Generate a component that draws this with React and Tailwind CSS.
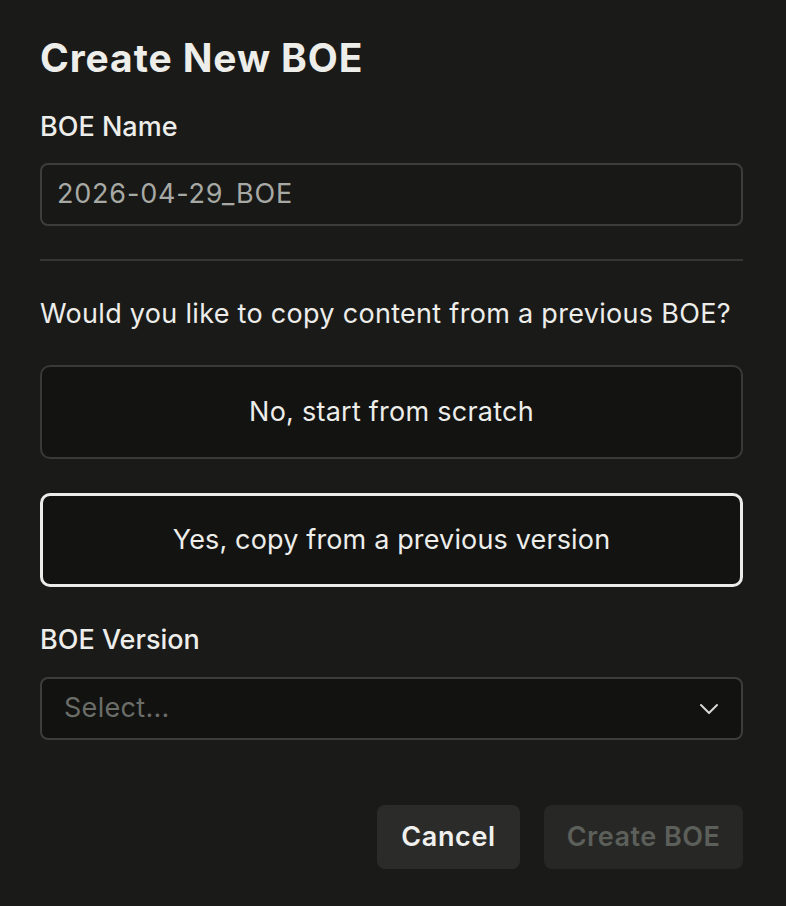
export default function App() {
  return (
    <div
      className="min-h-[906px] w-[786px] bg-[#1a1a19] text-[#ededea] pl-10 pr-[43px] pt-[32px]"
      style={{ fontFamily: 'Inter, "Noto Sans", sans-serif' }}
    >
      <h1 className="text-[39px] font-bold leading-[52px] tracking-[0.9px]">Create New BOE</h1>

      <label className="block mt-[25px] text-[27px] font-medium leading-[36px]">BOE Name</label>
      <div className="mt-[18px] h-[63px] rounded-lg border-2 border-[#3c3e3b] bg-[#181817] flex items-center px-[15px]">
        <span className="text-[27px] tracking-[0.8px] text-[#a7a9a4]">2026-04-29_BOE</span>
      </div>

      <div className="mt-[33px] h-[2px] bg-[#363735]" />

      <p className="mt-[35px] text-[27px] leading-[36px] tracking-[0.3px]">
        Would you like to copy content from a previous BOE?
      </p>

      <div className="mt-[33px] flex flex-col gap-[34px]">
        <button className="h-[94px] w-full rounded-[10px] border-2 border-[#393a38] bg-[#131312] text-[27px] tracking-[0.25px] text-[#ededea]">
          No, start from scratch
        </button>
        <button className="h-[94px] w-full rounded-[10px] border-[3px] border-[#ececea] bg-[#131312] text-[27px] tracking-[0.15px] text-[#ededea]">
          Yes, copy from a previous version
        </button>
      </div>

      <label className="block mt-[35px] text-[27px] font-medium leading-[36px]">BOE Version</label>
      <div className="mt-[19px] h-[63px] rounded-lg border-2 border-[#3c3e3b] bg-[#121211] flex items-center justify-between pl-[22px] pr-[22px]">
        <span className="text-[27px] tracking-[0.3px] text-[#6a6d68]">Select...</span>
        <svg width="20" height="12" viewBox="0 0 20 12" fill="none" className="text-[#d8d8d5]">
          <path d="M2 2l8 8 8-8" stroke="currentColor" strokeWidth="2" strokeLinecap="round" strokeLinejoin="round" />
        </svg>
      </div>

      <div className="mt-[65px] flex justify-end gap-6">
        <button className="h-16 w-[143px] rounded-lg bg-[#2b2c2a] text-[27px] font-semibold tracking-[0.6px] text-[#f0f0ee]">
          Cancel
        </button>
        <button className="h-16 w-[199px] rounded-lg bg-[#272826] text-[27px] font-semibold tracking-[0.5px] text-[#5c5f5a]">
          Create BOE
        </button>
      </div>
    </div>
  );
}
